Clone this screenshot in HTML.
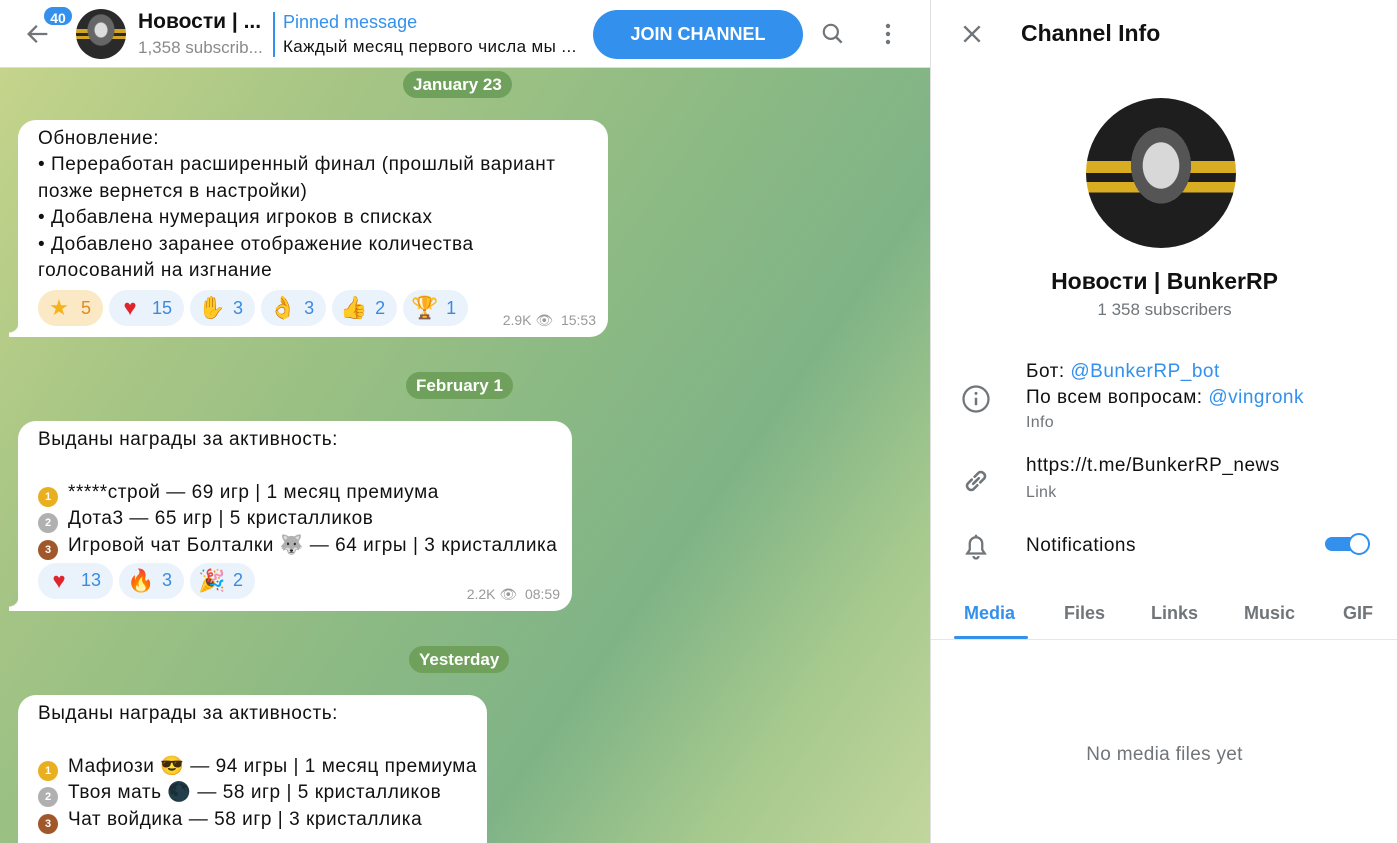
<!DOCTYPE html>
<html><head><meta charset="utf-8"><style>
*{box-sizing:border-box;margin:0;padding:0}
body{width:1397px;height:843px;overflow:hidden;font-family:"Liberation Sans",sans-serif;position:relative;background:#fff}
#chat{position:absolute;left:0;top:0;width:930px;height:843px;background:linear-gradient(125deg,#c9d68c 0%,#a8c685 25%,#8fbb84 50%,#7fb386 70%,#a6c98e 85%,#c2d69c 100%);overflow:hidden}
#hdr{position:absolute;left:0;top:0;width:930px;height:68px;background:#fff;border-bottom:1px solid #ddd}
.pill{position:absolute;height:27px;line-height:27px;padding:0 10px;border-radius:14px;background:#6fa05c;color:#fff;font-weight:bold;font-size:17px}
.b{position:absolute;left:18px;background:#fff;border-radius:18px 18px 18px 0;padding:6px 20px 0 20px;font-size:19px;letter-spacing:0.55px;color:#111;white-space:nowrap}
.b .l{height:26.4px;line-height:26.4px}
.b:before{content:"";position:absolute;left:-9px;bottom:0;width:10px;height:14px;background:radial-gradient(circle at 0 0,transparent 9px,#fff 10px)}
.rx{display:flex;gap:6px;margin-top:6px;letter-spacing:0}
.r{height:36px;border-radius:18px;background:#eaf2fc;display:flex;align-items:center;padding:0 12px 0 8px;color:#3a8ae0;font-size:18px;gap:9px}
.e{width:26px;height:26px;display:inline-block;text-align:center;line-height:26px;font-size:22px}
.meta{position:absolute;right:12px;bottom:8px;font-size:14px;color:#999;letter-spacing:0}
.m{display:inline-block;width:20px;height:20px;border-radius:50%;vertical-align:-2px;margin-right:10px;font-size:11px;color:#fff;text-align:center;line-height:20px;font-weight:bold;letter-spacing:0}
#rp{position:absolute;left:930px;top:0;width:467px;height:843px;background:#fff;border-left:1px solid #e0e0e0}
.lbl{color:#707579;font-size:16px;letter-spacing:0.3px}
.t{font-size:19px;letter-spacing:0.5px;color:#111}
a{color:#3390ec;text-decoration:none}
</style></head><body>
<div id="chat">
<div class="pill" style="left:403px;top:71px">January 23</div>
<div class="b" style="top:120px;width:590px;height:217px"><div class="l">Обновление:</div><div class="l">• Переработан расширенный финал (прошлый вариант</div><div class="l">позже вернется в настройки)</div><div class="l">• Добавлена нумерация игроков в списках</div><div class="l">• Добавлено заранее отображение количества</div><div class="l">голосований на изгнание</div>
<div class="rx"><div class="r" style="background:#fbe8c4;color:#e08a20"><span class="e" style="color:#f5b21a">★</span>5</div><div class="r"><span class="e" style="color:#e0242b">♥</span>15</div><div class="r"><span class="e" style="color:#f4b63a">✋</span>3</div><div class="r"><span class="e" style="color:#f4b63a">👌</span>3</div><div class="r"><span class="e" style="color:#f4b63a">👍</span>2</div><div class="r"><span class="e" style="color:#d79a1a">🏆</span>1</div></div>
<div class="meta">2.9K 👁 &nbsp;15:53</div></div>
<div class="pill" style="left:406px;top:372px">February 1</div>
<div class="b" style="top:421px;width:554px;height:190px"><div class="l">Выданы награды за активность:</div><div class="l"></div><div class="l"><span class="m" style="background:#e8b020">1</span>*****строй — 69 игр | 1 месяц премиума</div><div class="l"><span class="m" style="background:#b0b0b0">2</span>Дота3 — 65 игр | 5 кристалликов</div><div class="l"><span class="m" style="background:#a0582a">3</span>Игровой чат Болталки 🐺 — 64 игры | 3 кристаллика</div>
<div class="rx" style="margin-top:4px"><div class="r"><span class="e" style="color:#e0242b">♥</span>13</div><div class="r"><span class="e" style="color:#f06020">🔥</span>3</div><div class="r"><span class="e" style="color:#e0a030">🎉</span>2</div></div>
<div class="meta">2.2K 👁 &nbsp;08:59</div></div>
<div class="pill" style="left:409px;top:646px">Yesterday</div>
<div class="b" style="top:695px;width:469px;height:170px"><div class="l">Выданы награды за активность:</div><div class="l"></div><div class="l"><span class="m" style="background:#e8b020">1</span>Мафиози 😎 — 94 игры | 1 месяц премиума</div><div class="l"><span class="m" style="background:#b0b0b0">2</span>Твоя мать 🌑 — 58 игр | 5 кристалликов</div><div class="l"><span class="m" style="background:#a0582a">3</span>Чат войдика — 58 игр | 3 кристаллика</div></div>
<div id="hdr">
<svg style="position:absolute;left:24px;top:20px" width="28" height="28" viewBox="0 0 24 24"><path d="M20 12H5M11 5l-7 7 7 7" stroke="#707579" stroke-width="2" fill="none"/></svg>
<div style="position:absolute;left:42px;top:5px;height:22px;min-width:32px;border-radius:11px;background:#3390ec;color:#fff;font-size:14px;font-weight:bold;text-align:center;line-height:22px;border:2px solid #fff">40</div>
<div style="position:absolute;left:76px;top:9px;width:50px;height:50px;border-radius:50%;background:radial-gradient(ellipse at 50% 42%,#ddd 0 6px,#666 7px 13px,transparent 14px),linear-gradient(#2a2a2a 0 40%,#d4a520 40% 48%,#2a2a2a 48% 54%,#d4a520 54% 60%,#2a2a2a 60%)"></div>
<div style="position:absolute;left:138px;top:10px;font-size:21px;font-weight:bold;color:#111">Новости | ...</div>
<div style="position:absolute;left:138px;top:38px;font-size:17px;color:#8a8a8a">1,358 subscrib...</div>
<div style="position:absolute;left:273px;top:12px;width:2px;height:45px;background:#3390ec"></div>
<div style="position:absolute;left:283px;top:12px;font-size:18px;color:#3390ec">Pinned message</div>
<div style="position:absolute;left:283px;top:37px;font-size:17px;color:#111;letter-spacing:0.4px">Каждый месяц первого числа мы ...</div>
<div style="position:absolute;left:593px;top:10px;width:210px;height:49px;border-radius:25px;background:#3390ec;color:#fff;font-size:18px;font-weight:bold;text-align:center;line-height:49px">JOIN CHANNEL</div>
<svg style="position:absolute;left:820px;top:21px" width="26" height="26" viewBox="0 0 24 24"><circle cx="10" cy="10" r="6.5" stroke="#707579" stroke-width="2" fill="none"/><path d="M15 15l5 5" stroke="#707579" stroke-width="2.2"/></svg>
<svg style="position:absolute;left:876px;top:22px" width="24" height="24" viewBox="0 0 24 24"><circle cx="12" cy="4" r="2.2" fill="#707579"/><circle cx="12" cy="12" r="2.2" fill="#707579"/><circle cx="12" cy="20" r="2.2" fill="#707579"/></svg>
</div>
</div>
<div id="rp">
<svg style="position:absolute;left:30px;top:23px" width="22" height="22" viewBox="0 0 20 20"><path d="M3 3l14 14M17 3L3 17" stroke="#707579" stroke-width="2.2"/></svg>
<div style="position:absolute;left:90px;top:20px;font-size:23px;font-weight:bold;color:#111">Channel Info</div>
<div style="position:absolute;left:155px;top:98px;width:150px;height:150px;border-radius:50%;background:radial-gradient(ellipse 30px 38px at 50% 45%,#d8d8d8 0 60%,#555 62% 100%,transparent 100%),linear-gradient(#1e1e1e 0 42%,#d9ad22 42% 50%,#1e1e1e 50% 56%,#d9ad22 56% 63%,#1e1e1e 63%)"></div>
<div style="position:absolute;left:0;width:467px;top:268px;text-align:center;font-size:23px;font-weight:bold;color:#111">Новости | BunkerRP</div>
<div style="position:absolute;left:0;width:467px;top:300px;text-align:center;font-size:17px;color:#707579">1 358 subscribers</div>
<svg style="position:absolute;left:30px;top:384px" width="30" height="30" viewBox="0 0 24 24"><circle cx="12" cy="12" r="10" stroke="#707579" stroke-width="1.8" fill="none"/><path d="M12 11v6" stroke="#707579" stroke-width="2"/><circle cx="12" cy="7.5" r="1.2" fill="#707579"/></svg>
<div class="t" style="position:absolute;left:95px;top:359px;line-height:26px">Бот: <a>@BunkerRP_bot</a><br>По всем вопросам: <a>@vingronk</a></div>
<div class="lbl" style="position:absolute;left:95px;top:414px">Info</div>
<svg style="position:absolute;left:28px;top:464px" width="34" height="34" viewBox="0 0 24 24"><path d="M10 14l4-4M9 11l-3 3a3 3 0 004 4l3-3M15 13l3-3a3 3 0 00-4-4l-3 3" stroke="#707579" stroke-width="1.8" fill="none" stroke-linecap="round"/></svg>
<div class="t" style="position:absolute;left:95px;top:455px">https://t.me/BunkerRP_news</div>
<div class="lbl" style="position:absolute;left:95px;top:484px">Link</div>
<svg style="position:absolute;left:30px;top:531px" width="30" height="30" viewBox="0 0 24 24"><path d="M5 18h14l-2-3v-5a5 5 0 00-10 0v5zM12 5V3M10 20a2 2 0 004 0" stroke="#707579" stroke-width="1.8" fill="none"/></svg>
<div class="t" style="position:absolute;left:95px;top:535px">Notifications</div>
<div style="position:absolute;left:394px;top:537px;width:36px;height:14px;border-radius:7px;background:#3390ec"></div>
<div style="position:absolute;left:417px;top:533px;width:22px;height:22px;border-radius:50%;background:#fff;border:2px solid #3390ec"></div>
<div style="position:absolute;top:603px;left:0;width:467px;font-size:18px;font-weight:bold;color:#707579">
<span style="position:absolute;left:33px;color:#3390ec">Media</span><span style="position:absolute;left:133px">Files</span><span style="position:absolute;left:220px">Links</span><span style="position:absolute;left:313px">Music</span><span style="position:absolute;left:412px">GIF</span></div>
<div style="position:absolute;left:23px;top:636px;width:74px;height:3px;border-radius:2px;background:#3390ec"></div>
<div style="position:absolute;left:0;top:639px;width:467px;height:1px;background:#e6e6e6"></div>
<div class="t" style="position:absolute;left:0;width:467px;top:744px;text-align:center;color:#707579;letter-spacing:0.3px">No media files yet</div>
</div>
</body></html>
